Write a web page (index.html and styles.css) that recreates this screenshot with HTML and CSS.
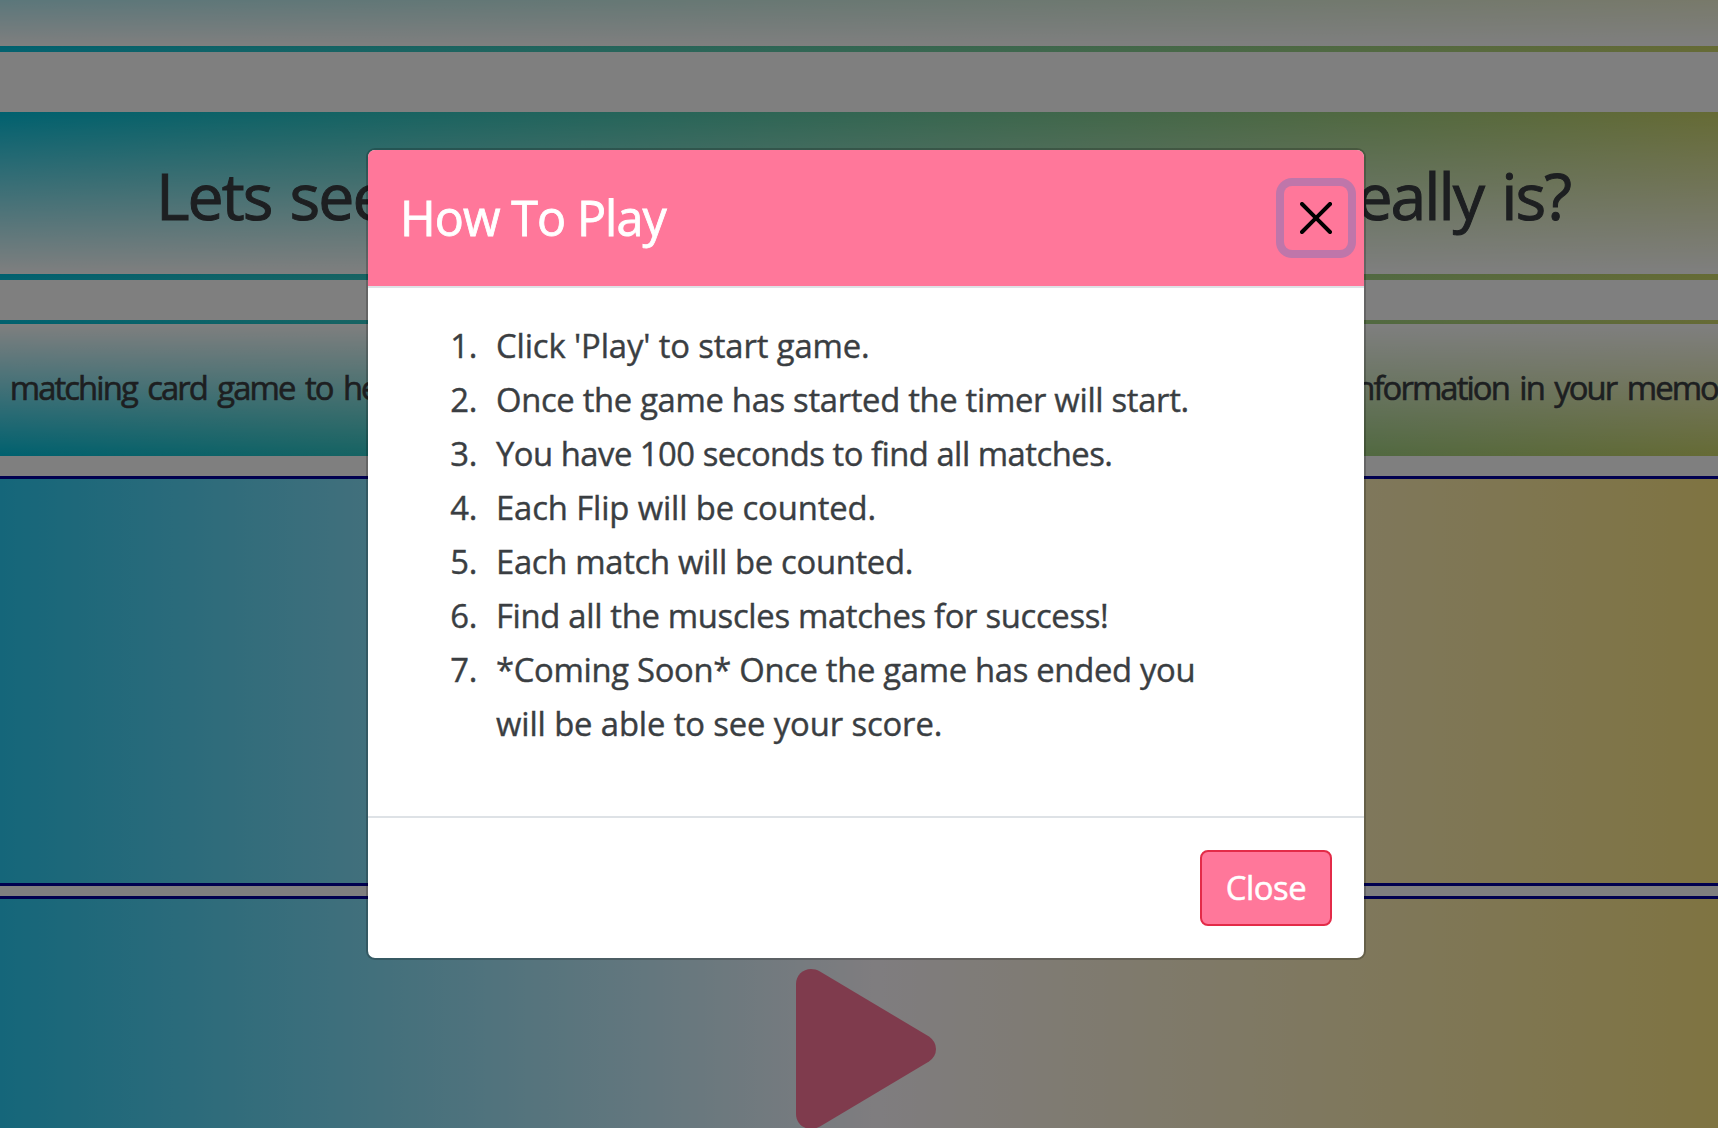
FILE: index.html
```
<!DOCTYPE html>
<html lang="en">
<head>
<meta charset="utf-8">
<title>Muscle Memory</title>
<link rel="stylesheet" href="styles.css">
</head>
<body>
<main class="page">
  <div class="band band-logo"></div>
  <div class="band band-hero"><h1>Lets see how good your muscle memory really is?</h1></div>
  <div class="band-intro"><p>a matching card game to help you learn the major muscles of the body and then safely store the information in your memory</p></div>
  <section class="panel"></section>
  <section class="panel panel-play">
    <svg class="play" viewBox="0 0 140 160" width="140" height="160" aria-hidden="true"><path d="M0 15C0 3.5 12-4 24 2.5L133 67.5Q140 72.500 140 80Q140 87.500 133 92.500L24 157.500C12 164 0 156.500 0 145Z"/></svg>
  </section>
</main>
<div class="backdrop">
  <div class="modal" role="dialog">
    <header class="modal-header">
      <h2>How To Play</h2>
      <button class="btn-x" aria-label="Close"><svg viewBox="0 0 16 16" width="32" height="32"><path d="M.293.293a1 1 0 011.414 0L8 6.586 14.293.293a1 1 0 111.414 1.414L9.414 8l6.293 6.293a1 1 0 01-1.414 1.414L8 9.414l-6.293 6.293a1 1 0 01-1.414-1.414L6.586 8 .293 1.707a1 1 0 010-1.414z"/></svg></button>
    </header>
    <div class="modal-body">
      <ol>
        <li><span class="loose">Click 'Play' to start game.</span></li>
        <li><span>Once the game has started the timer will start.</span></li>
        <li><span class="tight">You have 100 seconds to find all matches.</span></li>
        <li><span class="loose">Each Flip will be counted.</span></li>
        <li><span>Each match will be counted.</span></li>
        <li><span>Find all the muscles matches for success!</span></li>
        <li><span>*Coming Soon* Once the game has ended you<br><span class="loose">will be able to see your score.</span></span></li>
      </ol>
    </div>
    <footer class="modal-footer"><button class="btn-close">Close</button></footer>
  </div>
</div>
</body>
</html>
```
FILE: styles.css
```
* { box-sizing: border-box; margin: 0; padding: 0; }
body {
  height: 1128px;
  overflow: hidden;
  background: #fff;
  color: #3a3e42;
  font: 400 32.8px/54px "Open Sans", "Noto Sans", sans-serif;
  -webkit-text-stroke: .4px currentColor;
}
.page { height: 1128px; overflow: hidden; display: flex; flex-direction: column; }
.page > * { flex: none; }

.band {
  height: 168px;
  border-bottom: 6px solid transparent;
  background: linear-gradient(to top, #fff, rgba(255, 255, 255, 0)), linear-gradient(to right, #00c2de, #ccd66a);
}
.band-logo { margin-top: -116px; }
.band-hero {
  margin-top: 60px;
  padding: 4px 148px 0 156px;
  display: flex;
  align-items: center;
}
.band-hero h1 {
  width: 100%;
  font-size: 64.4px;
  font-weight: 400;
  letter-spacing: -2px;
  white-space: nowrap;
  text-align-last: justify;
  -webkit-text-stroke-width: 1px;
}
.band-intro {
  height: 136px;
  margin-top: 40px;
  border-top: 4px solid transparent;
  display: flex;
  align-items: center;
  background: linear-gradient(to bottom, #fff, rgba(255, 255, 255, 0)), linear-gradient(to right, #00c2de, #ccd66a);
}
.band-intro p {
  flex: none;
  width: 1761px;
  margin: -4px 0 0 -17px;
  letter-spacing: -1.9px;
  white-space: nowrap;
  text-align-last: justify;
  -webkit-text-stroke-width: .6px;
}

.panel {
  height: 410px;
  margin-top: 20px;
  border-top: 3px solid #00009f;
  border-bottom: 3px solid #00009f;
  background: linear-gradient(to right, #2acdf4, #fffaff 51%, #fee884);
}
.panel-play {
  margin-top: 10px;
  padding: 70px 0 0 796px;
}
.play { display: block; fill: #ff779a; }

.backdrop {
  position: absolute;
  inset: 0;
  padding-top: 148px;
  background: rgba(0, 0, 0, .5);
}
.modal {
  width: 1000px;
  margin-left: 366px;
  border: 2px solid rgba(0, 0, 0, .2);
  border-radius: 9px;
  background: #fff;
  background-clip: padding-box;
}
.modal-header {
  height: 138px;
  padding: 0 16px 0 32px;
  display: flex;
  align-items: center;
  justify-content: space-between;
  border-bottom: 2px solid #dee2e6;
  border-radius: 7px 7px 0 0;
  background: #ff779a;
  background-clip: padding-box;
  color: #fff;
}
.modal-header h2 {
  margin-top: -2px;
  font-size: 48.4px;
  font-weight: 400;
  letter-spacing: -.9px;
  -webkit-text-stroke: .8px #fff;
}
.btn-x {
  width: 64px;
  height: 64px;
  padding: 16px;
  border: 0;
  border-radius: 8px;
  background: transparent;
  box-shadow: 0 0 0 8px rgba(0, 114, 220, .25);
}
.btn-x svg { display: block; }

.modal-body { height: 528px; padding: 31px 32px; }
.modal-body ol { list-style: none; counter-reset: step; }
.modal-body li {
  display: flex;
  gap: 19px;
  letter-spacing: -.32px;
  counter-increment: step;
}
.modal-body li::before {
  content: counter(step) ".";
  width: 77px;
  text-align: right;
}
.modal-body .loose { letter-spacing: -.12px; }
.modal-body .tight { letter-spacing: -.5px; }

.modal-footer {
  height: 142px;
  padding: 32px;
  display: flex;
  justify-content: flex-end;
  border-top: 2px solid #dee2e6;
}
.btn-close {
  width: 132px;
  height: 76px;
  border: 2px solid #e32b48;
  border-radius: 8px;
  background: #ff779a;
  color: #fff;
  font: inherit;
  letter-spacing: -.4px;
  -webkit-text-stroke: .5px #fff;
}
```
